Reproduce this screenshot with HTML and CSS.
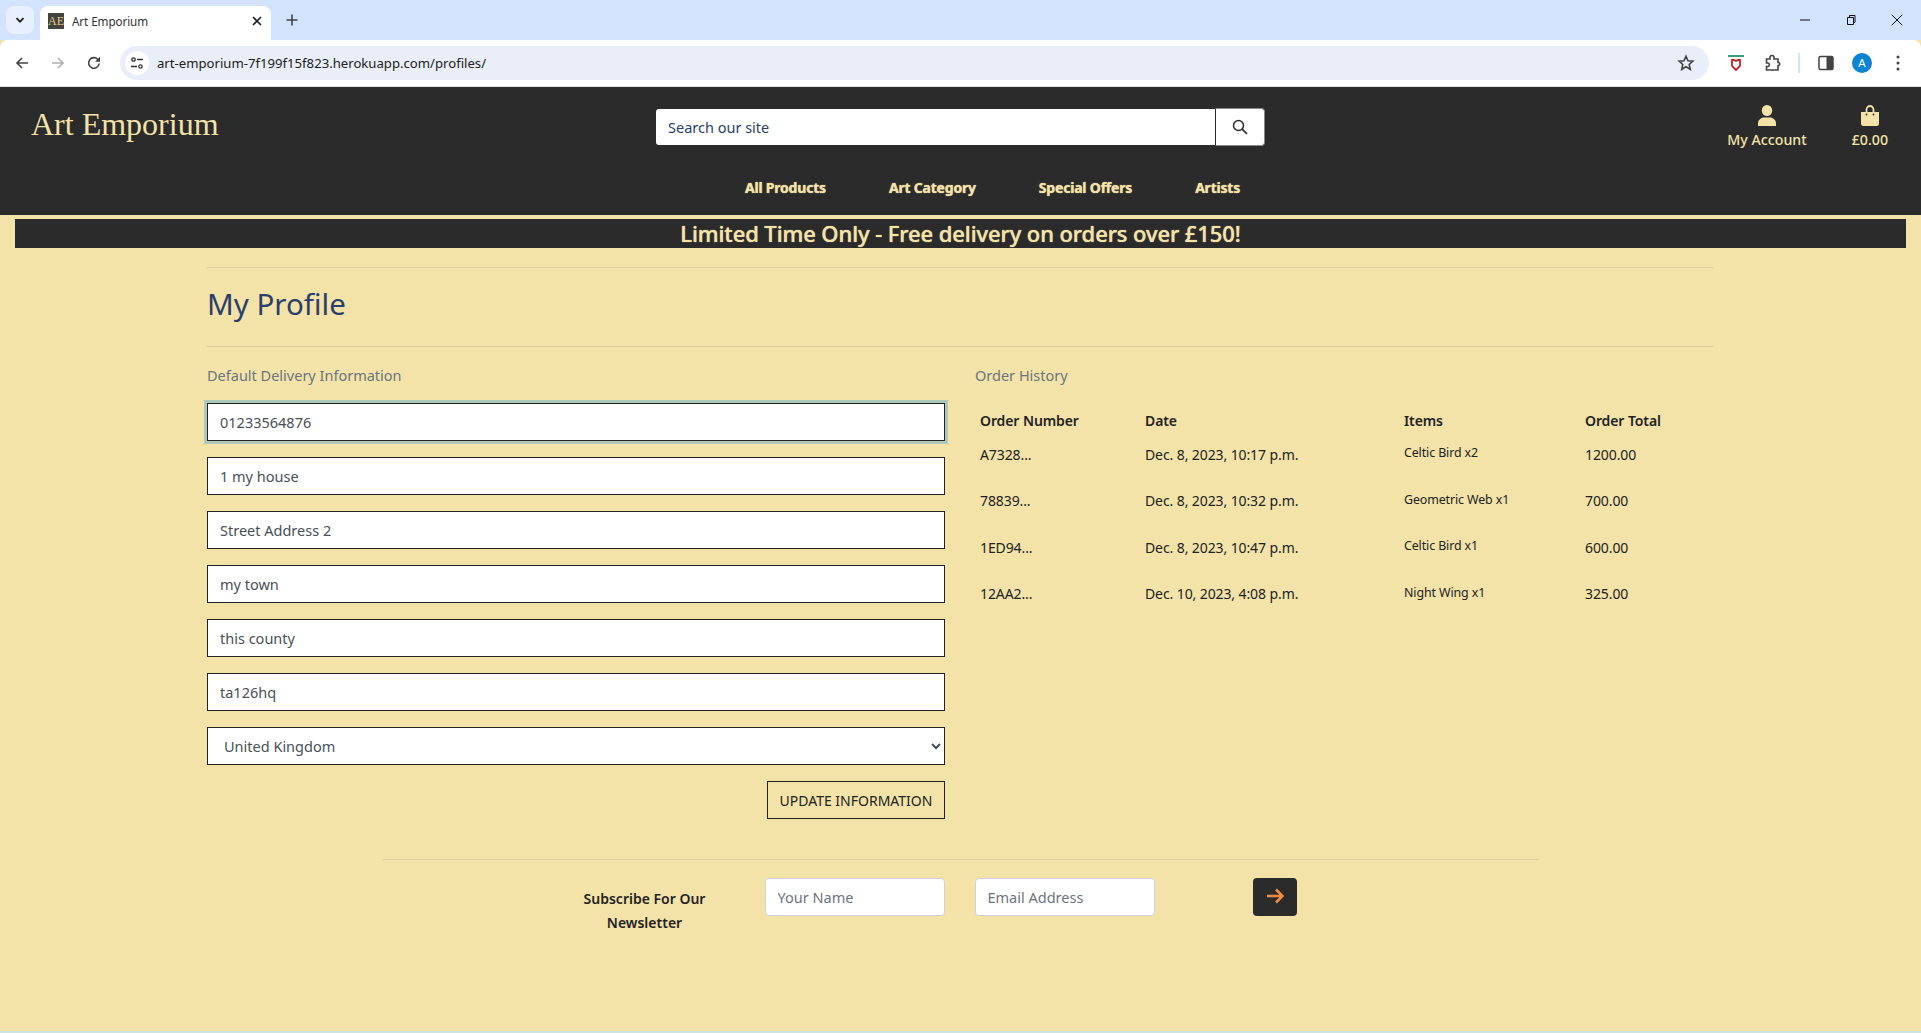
FILE: index.html
```html
<!DOCTYPE html>
<html lang="en">
<head>
  <meta charset="UTF-8">
  <meta name="viewport" content="width=device-width, initial-scale=1.0">
  <title>Art Emporium</title>
  <link rel="stylesheet" href="styles.css">
</head>
<body>
  <!-- browser tab strip -->
  <div class="tabstrip">
    <div class="tab-menu">
      <svg width="12" height="12" viewBox="0 0 12 12"><path d="M2.5 4.2 6 7.7l3.5-3.5" fill="none" stroke="#1f1f1f" stroke-width="1.7"/></svg>
    </div>
    <div class="tab">
      <span class="favicon">AE</span>
      <span class="tab-title">Art Emporium</span>
      <svg class="tab-close" width="12" height="12" viewBox="0 0 12 12"><path d="M2 2l8 8M10 2l-8 8" stroke="#1f1f1f" stroke-width="1.6"/></svg>
    </div>
    <svg class="tab-new" width="14" height="14" viewBox="0 0 14 14"><path d="M7 1.5v11M1.5 7h11" stroke="#444" stroke-width="1.6"/></svg>
    <div class="window-controls">
      <svg width="12" height="12" viewBox="0 0 12 12"><path d="M1 6h10" stroke="#111" stroke-width="1"/></svg>
      <svg width="12" height="12" viewBox="0 0 12 12"><path d="M2.5 3.5h6v7h-6zM4.5 3.5v-2h5.500v7h-1.500" fill="none" stroke="#111" stroke-width="1"/></svg>
      <svg width="12" height="12" viewBox="0 0 12 12"><path d="M.8.8l10.400 10.400M11.200.8.800 11.200" stroke="#111" stroke-width="1"/></svg>
    </div>
  </div>

  <!-- browser toolbar -->
  <div class="toolbar">
    <svg class="tool-back" width="16" height="16" viewBox="0 0 16 16"><path d="M14 8H3M8 3 3 8l5 5" fill="none" stroke="#444" stroke-width="1.600"/></svg>
    <svg class="tool-forward" width="16" height="16" viewBox="0 0 16 16"><path d="M2 8h11M8 3l5 5-5 5" fill="none" stroke="#b0b0b0" stroke-width="1.600"/></svg>
    <svg class="tool-reload" width="16" height="16" viewBox="0 0 16 16"><path d="M13.200 8.500A5.300 5.300 0 1 1 11.700 4.200L13.500 6" fill="none" stroke="#444" stroke-width="1.600"/><path d="M14 1.800v5h-5z" fill="#444"/></svg>
    <div class="addressbar">
      <span class="site-info">
        <svg width="14" height="14" viewBox="0 0 14 14"><circle cx="3.500" cy="3.500" r="1.700" fill="none" stroke="#333" stroke-width="1.300"/><path d="M7 3.500h6M1 10.500h6" stroke="#333" stroke-width="1.300"/><circle cx="10.500" cy="10.500" r="1.700" fill="none" stroke="#333" stroke-width="1.300"/></svg>
      </span>
      <span class="url">art-emporium-7f199f15f823.herokuapp.com/profiles/</span>
      <svg class="star" width="18" height="18" viewBox="0 0 18 18"><path d="M9 2.200l2 4.500 4.900.5-3.700 3.300 1.100 4.800L9 12.800l-4.300 2.500 1.100-4.800L2.100 7.200 7 6.700z" fill="none" stroke="#444" stroke-width="1.600"/></svg>
    </div>
    <div class="tool-ext">
      <span class="ext-bar"></span>
      <svg width="10" height="12" viewBox="0 0 10 12"><path d="M1 1h2l2 1 2-1h2v6l-4 4-4-4z" fill="none" stroke="#c8202a" stroke-width="1.800"/></svg>
    </div>
    <svg class="tool-puzzle" width="18" height="18" viewBox="0 0 18 18"><path d="M2.500 5H6V3.500a2 2 0 0 1 4 0V5h4v3.500h1a2 2 0 0 1 0 3h-1V16H2.500v-3.500H4a1.800 1.800 0 0 0 0-3.500H2.500z" fill="none" stroke="#444" stroke-width="1.600"/></svg>
    <span class="tool-sep"></span>
    <svg class="tool-panel" width="16" height="16" viewBox="0 0 16 16"><rect x="1" y="1.500" width="14" height="13" rx="1.500" fill="none" stroke="#444" stroke-width="1.500"/><rect x="8.500" y="1.500" width="6.500" height="13" fill="#444"/></svg>
    <span class="avatar">A</span>
    <svg class="tool-dots" width="4" height="16" viewBox="0 0 4 16"><circle cx="2" cy="2" r="1.500" fill="#444"/><circle cx="2" cy="8" r="1.500" fill="#444"/><circle cx="2" cy="14" r="1.500" fill="#444"/></svg>
  </div>

  <!-- site header -->
  <header class="site-header">
    <div class="header-top">
      <div class="header-left"><a class="logo">Art Emporium</a></div>
      <form class="search">
        <input class="search-input" type="text" placeholder="Search our site">
        <button class="search-btn" type="button">
          <svg width="16" height="16" viewBox="0 0 16 16"><circle cx="6.500" cy="6.500" r="5" fill="none" stroke="#2b2b2b" stroke-width="1.500"/><path d="M10.200 10.200 15 15" stroke="#2b2b2b" stroke-width="1.700"/></svg>
        </button>
      </form>
      <div class="header-right">
        <a class="header-link account-link">
          <svg width="18" height="21" viewBox="0 0 18 21"><ellipse cx="9" cy="5.500" rx="5.200" ry="5.500" fill="#f3e3a9"/><path d="M0 21v-2.500C0 15 3 12.500 6 12.500h6c3 0 6 2.500 6 6V21z" fill="#f3e3a9"/></svg>
          <span>My Account</span>
        </a>
        <a class="header-link bag-link">
          <svg width="18" height="21" viewBox="0 0 18 21"><path d="M0 7h18v11.500a2.500 2.500 0 0 1-2.500 2.500h-13A2.500 2.500 0 0 1 0 18.500z" fill="#f3e3a9"/><path d="M5.500 8V4.500a3.500 3.500 0 0 1 7 0V8" fill="none" stroke="#f3e3a9" stroke-width="1.800"/><circle cx="5.500" cy="9.500" r=".9" fill="#2b2b2b"/><circle cx="12.500" cy="9.500" r=".9" fill="#2b2b2b"/></svg>
          <span>£0.00</span>
        </a>
      </div>
    </div>
    <nav class="main-nav">
      <a>All Products</a>
      <a>Art Category</a>
      <a>Special Offers</a>
      <a>Artists</a>
    </nav>
  </header>

  <div class="banner">Limited Time Only - Free delivery on orders over £150!</div>

  <main class="container">
    <hr class="rule">
    <h2 class="page-title">My Profile</h2>
    <hr class="rule">
    <div class="profile-row">
      <section class="col">
        <p class="section-label">Default Delivery Information</p>
        <form class="profile-form">
          <input class="field field-focus" type="text" value="01233564876">
          <input class="field" type="text" value="1 my house">
          <input class="field" type="text" placeholder="Street Address 2">
          <input class="field" type="text" value="my town">
          <input class="field" type="text" value="this county">
          <input class="field" type="text" value="ta126hq">
          <select class="field field-select">
            <option>United Kingdom</option>
          </select>
          <button class="update-btn" type="button">UPDATE INFORMATION</button>
        </form>
      </section>
      <section class="col">
        <p class="section-label">Order History</p>
        <table class="orders">
          <thead>
            <tr><th class="c-num">Order Number</th><th class="c-date">Date</th><th class="c-items">Items</th><th class="c-total">Order Total</th></tr>
          </thead>
          <tbody>
            <tr><td>A7328...</td><td>Dec. 8, 2023, 10:17 p.m.</td><td class="item-cell">Celtic Bird x2</td><td>1200.00</td></tr>
            <tr><td>78839...</td><td>Dec. 8, 2023, 10:32 p.m.</td><td class="item-cell">Geometric Web x1</td><td>700.00</td></tr>
            <tr><td>1ED94...</td><td>Dec. 8, 2023, 10:47 p.m.</td><td class="item-cell">Celtic Bird x1</td><td>600.00</td></tr>
            <tr><td>12AA2...</td><td>Dec. 10, 2023, 4:08 p.m.</td><td class="item-cell">Night Wing x1</td><td>325.00</td></tr>
          </tbody>
        </table>
      </section>
    </div>
  </main>

  <footer class="newsletter">
    <hr class="rule">
    <form class="newsletter-row">
      <div class="newsletter-title">Subscribe For Our Newsletter</div>
      <input class="news-input" type="text" placeholder="Your Name">
      <input class="news-input news-email" type="email" placeholder="Email Address">
      <button class="news-btn" type="button">
        <svg width="18" height="16" viewBox="0 0 18 16"><path d="M1 8h15M10 1.500 16.500 8 10 14.500" fill="none" stroke="#f58b3c" stroke-width="2.600"/></svg>
      </button>
    </form>
  </footer>
</body>
</html>
```

FILE: styles.css
```css
* {
  box-sizing: border-box;
}
body {
  margin: 0;
  min-height: 100vh;
  display: flex;
  flex-direction: column;
  background: #f3e3a9;
  color: #222;
  font-family: "Noto Sans", sans-serif;
  border-bottom: 2px solid #cfe3e0;
  overflow: hidden;
}

/* browser chrome */
.tabstrip {
  height: 40px;
  background: #d3e3fd;
  display: flex;
  align-items: flex-end;
  padding-left: 6px;
}
.tab-menu {
  width: 28px;
  height: 28px;
  margin-bottom: 6px;
  background: #e9f0fd;
  border-radius: 8px;
  display: flex;
  align-items: center;
  justify-content: center;
}
.tab {
  width: 231px;
  height: 34px;
  margin-left: 6px;
  padding: 0 8px 4px;
  background: #fff;
  border-radius: 8px 8px 0 0;
  display: flex;
  align-items: center;
  font-size: 11.700px;
  letter-spacing: -0.1px;
  color: #333;
}
.favicon {
  width: 16px;
  height: 16px;
  background: #454540;
  color: #e0cf8f;
  font-family: "Liberation Serif", serif;
  font-size: 12px;
  line-height: 16px;
  text-align: center;
  flex: none;
}
.tab-title {
  margin-left: 8px;
  flex: 1;
}
.tab-new {
  margin: 0 0 13px 14px;
}
.window-controls {
  margin-left: auto;
  margin-bottom: 14px;
  display: flex;
  gap: 34px;
  padding-right: 18px;
}
.toolbar {
  height: 47px;
  background: #fff;
  border-radius: 8px 8px 0 0;
  border-bottom: 1px solid #e3e3e3;
  display: flex;
  align-items: center;
  padding: 0 0 1px 14px;
}
.tool-forward {
  margin-left: 20px;
}
.tool-reload {
  margin-left: 20px;
}
.addressbar {
  width: 1589px;
  height: 34px;
  margin-left: 18px;
  background: #e9eef8;
  border-radius: 17px;
  display: flex;
  align-items: center;
  padding-left: 5px;
}
.site-info {
  width: 24px;
  height: 24px;
  background: #fff;
  border-radius: 50%;
  display: flex;
  align-items: center;
  justify-content: center;
}
.url {
  margin-left: 8px;
  flex: 1;
  font-size: 13.150px;
  color: #222;
}
.star {
  margin-right: 14px;
}
.tool-ext {
  width: 16px;
  margin-left: 19px;
  display: flex;
  flex-direction: column;
  align-items: center;
  gap: 2px;
}
.ext-bar {
  width: 16px;
  height: 2px;
  background: #3aa17e;
}
.tool-puzzle {
  margin-left: 20px;
}
.tool-sep {
  width: 2px;
  height: 20px;
  margin-left: 16px;
  background: #d3e3fd;
}
.tool-panel {
  margin-left: 18px;
}
.avatar {
  width: 20px;
  height: 20px;
  margin-left: 18px;
  border-radius: 50%;
  background: #0b84d4;
  color: #fff;
  font-family: "Liberation Sans", sans-serif;
  font-size: 11px;
  line-height: 20px;
  text-align: center;
}
.tool-dots {
  margin-left: 24px;
}

/* site header */
.site-header {
  height: 128px;
  background: #2b2b2b;
  color: #f3e3a9;
}
.header-top {
  display: flex;
  height: 76px;
}
.header-left {
  width: 656px;
  padding: 19px 0 0 31px;
}
.logo {
  font-family: "Liberation Serif", serif;
  font-size: 32px;
  line-height: 36px;
}
.search {
  width: 609px;
  margin-top: 21px;
  height: 38px;
  display: flex;
  align-items: center;
}
.search-input {
  width: 559px;
  height: 36px;
  padding: 0 12px;
  border: 0;
  border-radius: 3px 0 0 3px;
  background: #fff;
  font: 14.500px "Noto Sans", sans-serif;
}
.search-input::placeholder {
  color: #2a3f6b;
  opacity: 1;
}
.search-btn {
  width: 50px;
  height: 38px;
  padding: 2px 0 0;
  border: 1px solid #888;
  border-left-color: #2b2b2b;
  border-radius: 0 4px 4px 0;
  background: #fff;
}
.header-right {
  flex: 1;
  display: flex;
  justify-content: flex-end;
  padding: 18px 33px 0 0;
  gap: 45px;
}
.header-link {
  display: flex;
  flex-direction: column;
  align-items: center;
  font-size: 14.200px;
  font-weight: 500;
  line-height: 20px;
  gap: 4px;
}
.main-nav {
  height: 48px;
  padding-left: 64px;
  display: flex;
  justify-content: center;
  align-items: center;
  gap: 63px;
  font-size: 14px;
  font-weight: 700;
  letter-spacing: -0.2px;
  text-shadow: 0 0 1px #f3e3a9;
}

/* promo banner */
.banner {
  height: 29px;
  margin: 4px 15px 0;
  background: #2b2b2b;
  color: #f3e3a9;
  font-size: 22px;
  font-weight: 500;
  letter-spacing: -0.1px;
  line-height: 29px;
  text-align: center;
  text-shadow: 0 0 1px #f3e3a9;
}

/* profile */
.container {
  margin: 0 208px 0 207px;
  padding-top: 19px;
  flex: 1;
}
.rule {
  height: 1px;
  margin: 0;
  border: 0;
  background: #dccf9c;
}
.page-title {
  height: 78px;
  margin: 0;
  color: #2a3f6b;
  font-size: 29.500px;
  font-weight: 400;
  line-height: 72px;
}
.profile-row {
  display: grid;
  grid-template-columns: 738px 738px;
  column-gap: 30px;
}
.section-label {
  height: 56px;
  margin: 0;
  padding-top: 18px;
  color: #6c757d;
  font-size: 14.500px;
  line-height: 20px;
}
.profile-form {
  display: flex;
  flex-direction: column;
  gap: 16px;
}
.field {
  width: 100%;
  height: 38px;
  padding: 0 12px;
  border: 1px solid #222;
  border-radius: 0;
  background: #fff;
  color: #495057;
  font: 14.500px "Noto Sans", sans-serif;
}
.field::placeholder {
  color: #495057;
  opacity: 1;
}
.field-focus {
  box-shadow: 0 0 0 3px #afc8bc;
}
.update-btn {
  align-self: flex-end;
  width: 178px;
  height: 38px;
  border: 1px solid #222;
  background: transparent;
  color: #222;
  font: 14px "Noto Sans", sans-serif;
}
.orders {
  width: 738px;
  border-collapse: collapse;
  table-layout: fixed;
  font-size: 14px;
  letter-spacing: -0.1px;
}
.c-num {
  width: 165px;
}
.c-date {
  width: 259px;
}
.c-items {
  width: 181px;
}
.orders th {
  height: 28px;
  padding: 6px 0 0 5px;
  text-align: left;
  font-size: 14px;
  font-weight: 600;
}
.orders td {
  height: 46.500px;
  padding: 0 0 0 5px;
  vertical-align: middle;
  color: #222;
}
.orders .item-cell {
  padding-bottom: 3px;
  font-size: 12.400px;
}

/* newsletter */
.newsletter {
  width: 1156px;
  height: 172px;
  margin: 0 auto;
}
.newsletter-row {
  display: flex;
  align-items: flex-start;
  padding: 18px 0 0 177px;
}
.newsletter-title {
  width: 170px;
  margin-top: 9px;
  font-size: 14px;
  font-weight: 600;
  line-height: 24px;
  text-align: center;
}
.news-input {
  width: 180px;
  height: 38px;
  margin-left: 35px;
  padding: 0 12px;
  border: 1px solid #ced4da;
  border-radius: 4px;
  background: #fff;
  font: 14.500px "Noto Sans", sans-serif;
}
.news-email {
  margin-left: 30px;
}
.news-input::placeholder {
  color: #6c757d;
  opacity: 1;
}
.news-btn {
  width: 44px;
  height: 38px;
  margin-left: 98px;
  padding: 0;
  border: 0;
  border-radius: 4px;
  background: #2b2b2b;
}
```
